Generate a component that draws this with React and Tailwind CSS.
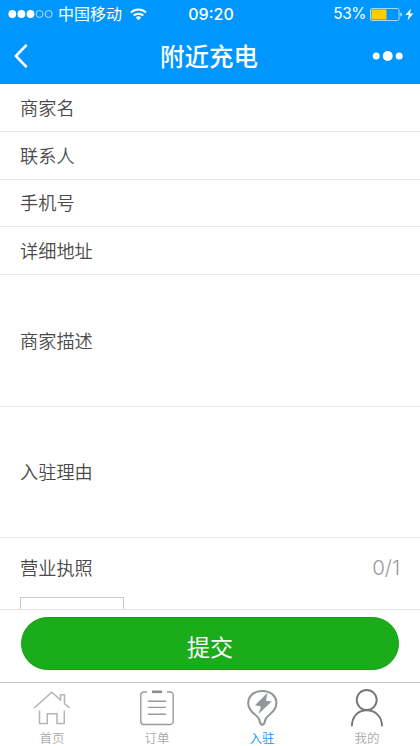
import React from "react";

const FIELDS = [
  { label: "商家名", size: "h-12" },
  { label: "联系人", size: "h-12" },
  { label: "手机号", size: "h-[47px]" },
  { label: "详细地址", size: "h-12" },
  { label: "商家描述", size: "h-[132px]" },
  { label: "入驻理由", size: "h-[131px]" },
];

const TABS = [
  { label: "首页", Icon: HomeIcon },
  { label: "订单", Icon: OrderIcon },
  { label: "入驻", Icon: JoinIcon, active: true },
  { label: "我的", Icon: UserIcon },
];

function HomeIcon() {
  return (
    <svg width="41" height="41" viewBox="0 0 41 41" fill="none" stroke="#b4b4b4" strokeWidth="1.5">
      <path d="M2.3 22 19.7 6.2 28.5 13.8V8.7h4v9L37.7 22" />
      <path d="M7.5 24.5v13h7.8V27.7H25v9.8h7.3v-13" />
    </svg>
  );
}

function OrderIcon() {
  return (
    <svg width="41" height="41" viewBox="0 0 41 41" fill="none" stroke="#9a9a9a" strokeWidth="1.4">
      <path d="M10 6H6.8a3 3 0 0 0-3 3v26.5a3 3 0 0 0 3 3h26.4a3 3 0 0 0 3-3V9a3 3 0 0 0-3-3H30" />
      <path d="M15 5.8h10" strokeWidth="2.6" stroke="#8c8c8c" />
      <path d="M10.8 15.2H29M10.8 21.4H29M10.8 28.2H29" />
    </svg>
  );
}

function JoinIcon() {
  return (
    <svg width="41" height="41" viewBox="0 0 41 41" fill="none">
      <path
        d="M20.300 5C12 5 6.200 10 6.200 17c0 5 2.800 8.300 6 10.800 3 2.400 4.700 3.700 5.300 6.700.4 2.200 1 4.100 2.800 4.100s2.400-1.900 2.800-4.100c.6-3 2.300-4.300 5.300-6.700 3.200-2.500 6-5.800 6-10.800C34.400 10 28.600 5 20.300 5Z"
        stroke="#929899"
        strokeWidth="2.1"
      />
      <path d="M25.500 6.800 13 19.300l6 1.200L16.500 28 29.700 15.500l-5.700-.8Z" fill="#929899" />
    </svg>
  );
}

function UserIcon() {
  return (
    <svg width="41" height="41" viewBox="0 0 41 41" fill="none" stroke="#777" strokeWidth="1.9">
      <circle cx="19.7" cy="14" r="10" />
      <path d="M4.9 40.200C4.900 30.500 11 24.200 19.700 24.200S35 30.500 35 40.200" />
    </svg>
  );
}

function StatusBar() {
  return (
    <div className="grid h-7 grid-cols-[1fr_auto_1fr] items-center pl-2 pr-1.5 text-[16px] leading-none">
      <div className="flex items-center">
        <svg width="46" height="10" viewBox="0 0 46 10" fill="#fff">
          <circle cx="4.3" cy="5" r="3.9" />
          <circle cx="13.4" cy="5" r="3.9" />
          <circle cx="22.5" cy="5" r="3.9" />
          <g fill="none" stroke="#fff" strokeWidth=".7">
            <circle cx="31.6" cy="5" r="3.5" />
            <circle cx="40.7" cy="5" r="3.5" />
          </g>
        </svg>
        <span className="ml-1">中国移动</span>
        <svg className="ml-2" width="17" height="13" viewBox="0 0 17 13" fill="none" stroke="#fff" strokeWidth="2">
          <path d="M1 4.600a10.800 10.800 0 0 1 15 0M3.700 7.600a7 7 0 0 1 9.600 0" />
          <path d="m8.500 12.300-2.700-2.800a4 4 0 0 1 5.400 0Z" fill="#fff" stroke="none" />
        </svg>
      </div>
      <span className="text-[16px] font-medium">09:20</span>
      <div className="flex items-center justify-end">
        <span className="text-[15.5px] tracking-[-0.5px]">53%</span>
        <svg className="ml-1" width="33" height="13" viewBox="0 0 33 13" fill="none">
          <rect x=".5" y=".5" width="28.5" height="12" rx="1.5" stroke="#a6d8ff" />
          <rect x="1.5" y="1.5" width="15" height="10" fill="#ffcc00" />
          <path d="M30.500 4.500c1.600.4 1.600 3.600 0 4Z" fill="#fff" />
        </svg>
        <svg className="ml-0.5" width="9" height="13" viewBox="0 0 9 13" fill="#fff">
          <path d="M6 .5.500 7h3.300L2.500 12.500 8.300 5.600H5Z" />
        </svg>
      </div>
    </div>
  );
}

function NavBar() {
  return (
    <div className="grid h-14 grid-cols-3 items-center px-3.5">
      <svg width="15" height="24" viewBox="0 0 15 24" fill="none" stroke="#fff" strokeWidth="2.6">
        <path d="M12.700.800 1.900 12l10.800 11.200" />
      </svg>
      <h1 className="pt-[3px] pr-0.5 text-center text-[24.5px] leading-none font-medium whitespace-nowrap">附近充电</h1>
      <svg className="mr-0.5 justify-self-end" width="32" height="12" viewBox="0 0 32 12" fill="#fff">
        <circle cx="4.2" cy="6" r="3.5" />
        <circle cx="15.7" cy="6" r="5" />
        <circle cx="27.2" cy="6" r="3.5" />
      </svg>
    </div>
  );
}

export default function App() {
  return (
    <div className="flex h-[746px] w-[420px] flex-col overflow-hidden bg-white font-['Inter','Noto_Sans_CJK_SC',sans-serif] text-[#4a4a4a]">
      <header className="h-[84px] shrink-0 bg-[#0096ff] text-white">
        <StatusBar />
        <NavBar />
      </header>

      <main className="h-[525px] shrink-0 overflow-hidden">
        {FIELDS.map((field) => (
          <div key={field.label} className={`flex items-center border-b border-[#e8e8e8] px-5 pt-px text-[18.2px] leading-none font-[350] ${field.size}`}>
            {field.label}
          </div>
        ))}
        <div className="px-5">
          <div className="flex h-[59px] items-center justify-between pt-px text-[18.2px] leading-none font-[350]">
            <span>营业执照</span>
            <span className="text-[20.5px] font-light text-[#999]">0/1</span>
          </div>
          <div className="h-24 w-[104px] border border-[#ccc]" />
        </div>
      </main>

      <div className="h-[73px] shrink-0 border-t border-[#e4e4e4] px-[21px] pt-[7px]">
        <button className="flex h-[53px] w-full items-center justify-center rounded-full border border-[#12a012] bg-[#1bac1b] pt-2.5 text-[23px] leading-none text-white">
          提交
        </button>
      </div>

      <nav className="grid h-16 shrink-0 grid-cols-4 border-t border-[#c4c4c4]">
        {TABS.map(({ label, Icon, active }) => (
          <div key={label} className={`flex flex-col items-center pt-[3px] text-[12.5px] leading-none font-[350] ${active ? "text-[#0096ff]" : "text-[#aaa]"}`}>
            <Icon />
            <span className="mt-1.5 pr-px">{label}</span>
          </div>
        ))}
      </nav>
    </div>
  );
}
